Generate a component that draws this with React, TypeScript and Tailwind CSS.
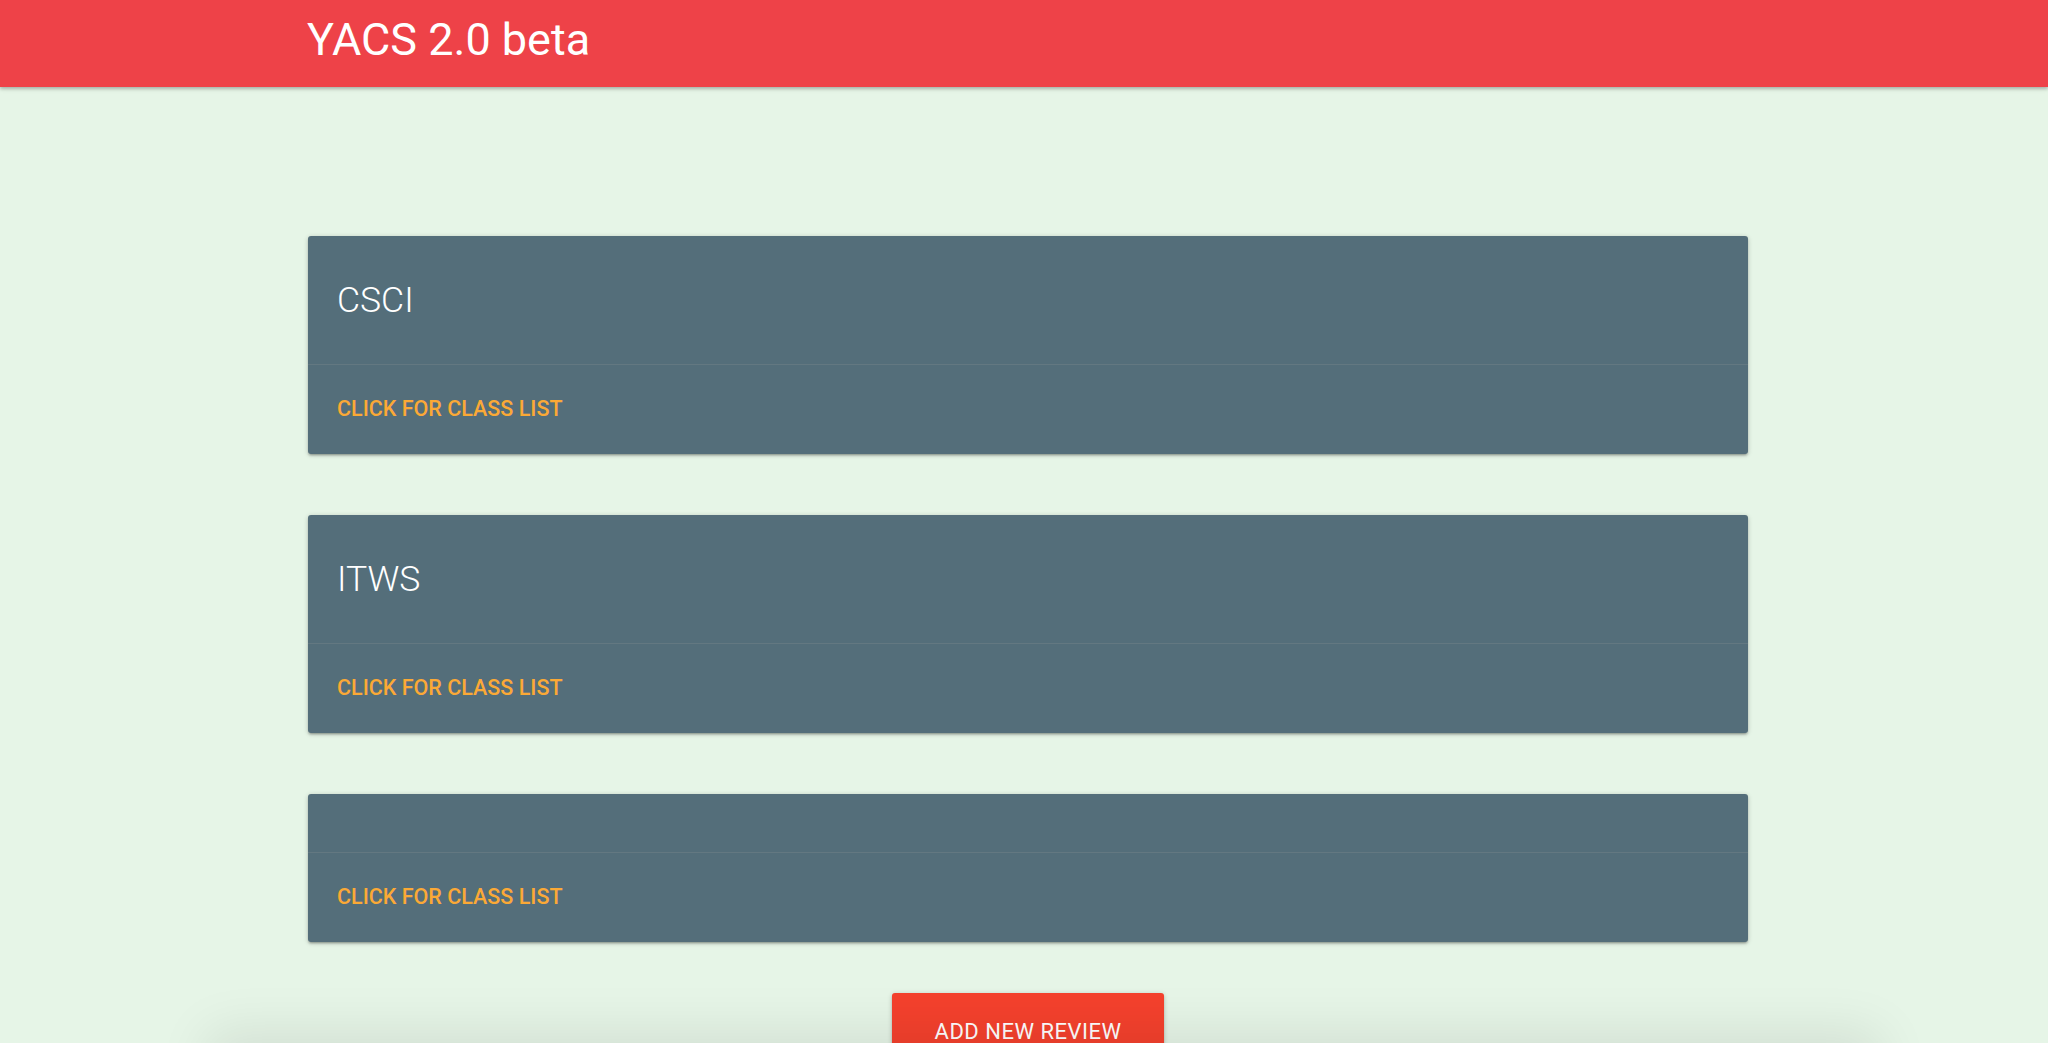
import React from "react";

const font = { fontFamily: "Roboto, 'Noto Sans', Arial, sans-serif" };

function Card({ title }: { title?: string }) {
  return (
    <div className="bg-[#546e7a] rounded-[3px] shadow-[0_2px_2px_0_rgba(0,0,0,0.14),0_3px_1px_-2px_rgba(0,0,0,0.12),0_1px_5px_0_rgba(0,0,0,0.2)]">
      <div className="px-[29px] py-[29px]">
        {title ? (
          <div className="text-white text-[35.5px] font-light leading-[70px]">{title}</div>
        ) : null}
      </div>
      <div className="border-t border-[rgba(160,160,160,0.2)] h-[90px] flex items-center px-[29px]">
        <span className="text-[#fba936] text-[21.5px] font-medium uppercase">Click for class list</span>
      </div>
    </div>
  );
}

export default function App() {
  return (
    <div className="min-h-screen bg-[#e6f5e7] overflow-hidden" style={font}>
      <header className="relative z-10 h-[87px] bg-[#ee4248] shadow-[0_2px_3px_0_rgba(0,0,0,0.2),0_1px_6px_0_rgba(0,0,0,0.12)]">
        <div className="pl-[307px] text-white text-[45px] leading-[80px] font-normal">YACS 2.0 beta</div>
      </header>
      <main className="pt-[149px]">
        <div className="ml-[308px] w-[1440px] flex flex-col gap-[61px]">
          <Card title="CSCI" />
          <Card title="ITWS" />
          <Card />
        </div>
        <div className="flex justify-center pt-[51px]">
          <button className="ml-[8px] h-[77px] px-[43px] bg-[#f4412d] text-white text-[22px] tracking-[0.5px] uppercase rounded-[3px] flex items-center shadow-[0_2px_2px_0_rgba(0,0,0,0.14),0_1px_5px_0_rgba(0,0,0,0.2)]">
            Add new review
          </button>
        </div>
        <div className="relative z-10 mx-auto -mt-[26px] w-[1660px] h-[200px] translate-x-[20px] bg-[#e6f5e7] shadow-[0_-6px_50px_6px_rgba(0,0,0,0.09)]"></div>
      </main>
    </div>
  );
}
